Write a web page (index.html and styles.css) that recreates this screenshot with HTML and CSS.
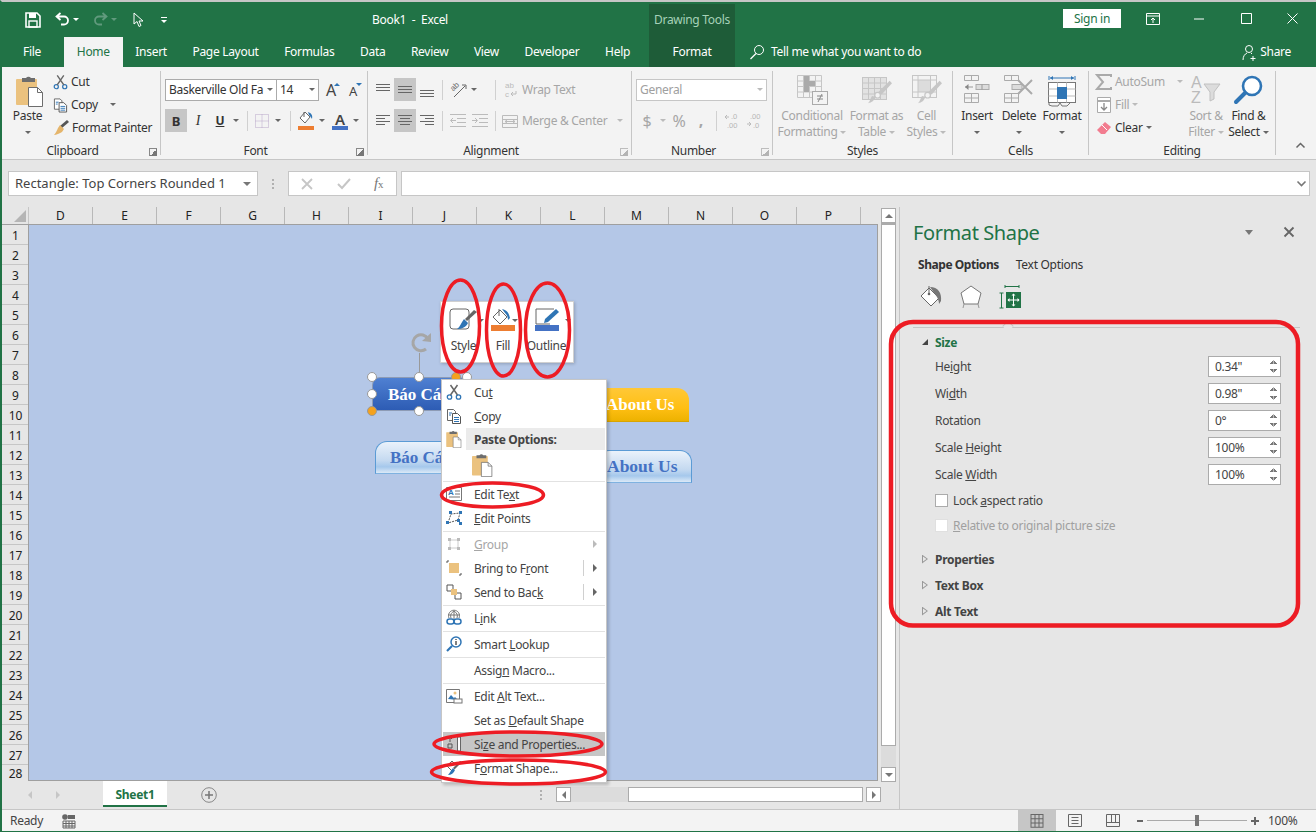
FILE: index.html
```html
<!DOCTYPE html>
<html lang="en">
<head>
    <meta charset="UTF-8">
    <meta name="viewport" content="width=device-width, initial-scale=1.0">
    <title>Book1 - Excel</title>
    <link rel="stylesheet" href="styles.css">
</head>
<body>
<svg class="defs" width="0" height="0">
    <symbol id="ic-paste" viewBox="0 0 28 32">
        <rect x="0" y="4" width="21" height="26" rx="1" fill="#ebc27f"/>
        <path d="M6 7V3h4a3 3 0 0 1 5 0h4v4z" fill="#6d6d6d"/>
        <path d="M12.5 12.5h9l5 5v14h-14z" fill="#fff" stroke="#6d6d6d"/>
        <path d="M21.5 12.5v5h5" fill="none" stroke="#6d6d6d"/>
    </symbol>
    <symbol id="ic-cut" viewBox="0 0 16 16">
        <circle cx="3.5" cy="13" r="2.2" fill="none" stroke="#2f75b5" stroke-width="1.3"/>
        <circle cx="12.5" cy="13" r="2.2" fill="none" stroke="#2f75b5" stroke-width="1.3"/>
        <path d="M4.5 11L11.5 1M11.5 11L4.5 1" stroke="#666" stroke-width="1.5"/>
    </symbol>
    <symbol id="ic-copy" viewBox="0 0 16 16">
        <path d="M1.5 1.5h6l2 2v9h-8z" fill="#fff" stroke="#666"/>
        <path d="M6.5 5.5h5l3 3v7h-8z" fill="#fff" stroke="#555"/>
        <path d="M8 9.5h5M8 11.5h5M8 13.5h5M3 5h3M3 7h2" stroke="#2f75b5"/>
    </symbol>
    <symbol id="ic-roller" viewBox="0 0 30 30">
        <path d="M30 4L17 18l-4-3L27 1z" fill="#c6c6c6"/>
        <circle cx="12" cy="19" r="3.5" fill="#f3f3f3" stroke="#c6c6c6" stroke-width="1.5"/>
        <path d="M9 21c-1 5-4 7-9 8 3-3 3-6 5-9z" fill="#c6c6c6"/>
    </symbol>
</svg>

<div class="app">
    <div class="titlebar">
        <div class="title-row">
            <div class="qat">
                <svg class="qat-save" width="16" height="16" viewBox="0 0 16 16"><path d="M1 1h11l3 3v11H1z" fill="none" stroke="#fff" stroke-width="1.6"/><rect x="4" y="1" width="7" height="5" fill="#fff"/><rect x="4" y="9" width="8" height="6" fill="none" stroke="#fff" stroke-width="1.4"/></svg>
                <svg class="qat-undo" width="15" height="15" viewBox="0 0 15 15"><path d="M5.5 1L1.5 4.5 5.5 8M2 4.5h7a4 4 0 0 1 0 8H6" fill="none" stroke="#fff" stroke-width="1.8"/></svg>
                <i class="qat-caret"></i>
                <svg class="qat-redo" width="15" height="15" viewBox="0 0 15 15"><path d="M9.5 1l4 3.5-4 3.5M13 4.5H6a4 4 0 0 0 0 8h3" fill="none" stroke="#619a7d" stroke-width="1.8"/></svg>
                <i class="qat-caret dim"></i>
                <svg class="qat-cursor" width="11" height="16" viewBox="0 0 11 16"><path d="M1 1v11l3-2.5 2 5 2-1-2-4.500h4z" fill="#217346" stroke="#fff"/></svg>
                <span class="qat-more"><i class="qat-line"></i><i class="qat-caret solo"></i></span>
            </div>
            <div class="doc-title">Book1&nbsp; -&nbsp; Excel</div>
            <div class="context-label">Drawing Tools</div>
            <button class="signin">Sign in</button>
            <div class="win-btn"><svg width="14" height="12" viewBox="0 0 14 12"><path d="M.5.5h13v11H.5zM.5 3h13M7 10V5M5 7l2-2 2 2" fill="none" stroke="#fff"/></svg></div>
            <div class="win-btn"><svg width="11" height="11" viewBox="0 0 11 11"><path d="M0 6h10" stroke="#fff"/></svg></div>
            <div class="win-btn"><svg width="11" height="11" viewBox="0 0 11 11"><path d="M.5.5h10v10H.5z" fill="none" stroke="#fff"/></svg></div>
            <div class="win-btn"><svg width="11" height="11" viewBox="0 0 11 11"><path d="M.5.500l10 10M10.500.500l-10 10" stroke="#fff"/></svg></div>
        </div>
        <div class="tab-row">
            <div class="tabs">
                <span class="tab tab-file">File</span>
                <span class="tab tab-active">Home</span>
                <span class="tab">Insert</span>
                <span class="tab">Page Layout</span>
                <span class="tab">Formulas</span>
                <span class="tab">Data</span>
                <span class="tab">Review</span>
                <span class="tab">View</span>
                <span class="tab">Developer</span>
                <span class="tab">Help</span>
            </div>
            <div class="tab-format">Format</div>
            <div class="tellme">
                <svg width="16" height="16" viewBox="0 0 16 16"><circle cx="10" cy="6" r="4.500" fill="none" stroke="#fff"/><path d="M7 9.500L1.500 15" stroke="#fff" stroke-width="1.300"/></svg>
                <span>Tell me what you want to do</span>
            </div>
            <div class="share">
                <svg width="17" height="17" viewBox="0 0 17 17"><circle cx="7" cy="5" r="3.500" fill="none" stroke="#fff"/><path d="M1 16c0-4 2-6 4-7M9 9l1 1M11 12v5M8.500 14.500h5" fill="none" stroke="#fff"/></svg>
                <span>Share</span>
            </div>
        </div>
    </div>

    <div class="ribbon">
        <!-- Clipboard -->
        <div class="group g-clipboard">
            <div class="group-body">
                <div class="big big-paste">
                    <div class="big-icon"><svg width="28" height="32"><use href="#ic-paste"/></svg></div>
                    <div class="big-text">Paste</div>
                    <div class="big-text"><i class="caret"></i></div>
                </div>
                <div class="small-col">
                    <div class="small"><svg width="15" height="16"><use href="#ic-cut"/></svg><span>Cut</span></div>
                    <div class="small"><svg width="15" height="16"><use href="#ic-copy"/></svg><span>Copy</span><i class="caret copy-caret"></i></div>
                    <div class="small">
                        <svg width="16" height="16" viewBox="0 0 16 16"><path d="M16 2L9 8 7 6l7-6z" fill="#555"/><path d="M7 5l4 4-2 3c-2 1-6 3-8 3 2-2 3-5 4-7z" fill="#e5b56b"/></svg>
                        <span>Format Painter</span>
                    </div>
                </div>
            </div>
            <div class="group-label with-launcher">Clipboard<i class="launcher"></i></div>
        </div>

        <!-- Font -->
        <div class="group g-font">
            <div class="group-body rows">
                <div class="row">
                    <div class="select sel-font"><span>Baskerville Old Fa</span><i class="caret"></i></div>
                    <div class="select sel-size"><span>14</span><i class="caret"></i></div>
                    <div class="tbtn grow-a"><span class="a-big">A</span><i class="tri-up"></i></div>
                    <div class="tbtn grow-a"><span class="a-small">A</span><i class="tri-down"></i></div>
                </div>
                <div class="row">
                    <div class="tbtn on b-btn">B</div>
                    <div class="tbtn i-btn">I</div>
                    <div class="tbtn u-btn">U</div>
                    <div class="cbtn"><i class="caret"></i></div>
                    <i class="vsep f-sep1"></i>
                    <div class="tbtn"><svg width="14" height="14" viewBox="0 0 14 14"><path d="M.5.500h13v13H.5zM7 .500v13M.5 7h13" fill="none" stroke="#b9a6c9" stroke-dasharray="1 1"/></svg></div>
                    <div class="cbtn"><i class="caret"></i></div>
                    <i class="vsep f-sep2"></i>
                    <div class="tbtn"><svg width="17" height="19" viewBox="0 0 17 19"><path d="M7 1l5 5-5 6-5-5z" fill="#fff" stroke="#666"/><path d="M6 1v5" stroke="#666"/><path d="M10 1c3 1 5 3 4 7-1-2-2-3-3-4z" fill="#2f75b5"/><rect x="0" y="15" width="16" height="4" fill="#ed7d31"/></svg></div>
                    <div class="cbtn"><i class="caret"></i></div>
                    <div class="tbtn color-a"><span>A</span><i></i></div>
                    <div class="cbtn"><i class="caret"></i></div>
                </div>
            </div>
            <div class="group-label with-launcher">Font<i class="launcher"></i></div>
        </div>

        <!-- Alignment -->
        <div class="group g-align">
            <div class="group-body rows">
                <div class="row">
                    <div class="tbtn"><svg width="14" height="14" viewBox="0 0 14 14"><path d="M0 1.500h14M0 4.500h14M0 7.500h14" stroke="#666"/></svg></div>
                    <div class="tbtn on"><svg width="14" height="14" viewBox="0 0 14 14"><path d="M0 3.500h14M0 6.500h14M0 9.500h14" stroke="#666"/></svg></div>
                    <div class="tbtn"><svg width="14" height="14" viewBox="0 0 14 14"><path d="M0 7.500h14M0 10.500h14M0 13.500h14" stroke="#666"/></svg></div>
                    <i class="vsep a-sep1"></i>
                    <div class="tbtn"><svg width="17" height="16" viewBox="0 0 17 16"><path d="M4 15L15 4" stroke="#666"/><path d="M12 3l4 0v4" fill="none" stroke="#666"/><text x="1" y="8" class="ico-text" transform="rotate(-45 4 6)">ab</text></svg></div>
                    <div class="cbtn"><i class="caret"></i></div>
                    <i class="vsep a-sep2"></i>
                    <div class="tbtn"><svg width="15" height="16" viewBox="0 0 15 16"><text x="2" y="6" class="ico-text off">ab</text><text x="2" y="15" class="ico-text off">c</text><path d="M13 9v3H8M10 10l-2 2 2 2" fill="none" stroke="#bbb"/></svg></div>
                    <span class="off-text wrap-label">Wrap Text</span>
                </div>
                <div class="row">
                    <div class="tbtn"><svg width="14" height="14" viewBox="0 0 14 14"><path d="M0 1.500h14M0 4.500h9M0 7.500h14M0 10.500h9" stroke="#666"/></svg></div>
                    <div class="tbtn on"><svg width="14" height="14" viewBox="0 0 14 14"><path d="M0 1.500h14M2 4.500h10M0 7.500h14M2 10.500h10" stroke="#666"/></svg></div>
                    <div class="tbtn"><svg width="14" height="14" viewBox="0 0 14 14"><path d="M0 1.500h14M5 4.500h9M0 7.500h14M5 10.500h9" stroke="#666"/></svg></div>
                    <i class="vsep a-sep1"></i>
                    <div class="tbtn"><svg width="16" height="14" viewBox="0 0 16 14"><path d="M0 .500h16M7 4.500h9M7 8.500h9M0 12.500h16M1 6.500h5M3 4L.5 6.500 3 9" fill="none" stroke="#bbb"/></svg></div>
                    <div class="tbtn"><svg width="16" height="14" viewBox="0 0 16 14"><path d="M0 .500h16M7 4.500h9M7 8.500h9M0 12.500h16M0 6.500h5M3 4l2.500 2.500L3 9" fill="none" stroke="#bbb"/></svg></div>
                    <i class="vsep a-sep3"></i>
                    <div class="tbtn"><svg width="16" height="16" viewBox="0 0 16 16"><path d="M.5 2.500h15v12H.5zM.5 6.500h15M.5 10.500h15M3 8.500h10M3 8.500l2-1.500M3 8.500l2 1.500M13 8.500l-2-1.500M13 8.500l-2 1.500" fill="none" stroke="#bbb"/></svg></div>
                    <span class="off-text">Merge &amp; Center</span>
                    <i class="caret off merge-caret"></i>
                </div>
            </div>
            <div class="group-label with-launcher">Alignment<i class="launcher off"></i></div>
        </div>

        <!-- Number -->
        <div class="group g-number">
            <div class="group-body rows">
                <div class="row">
                    <div class="select sel-number"><span>General</span><i class="caret off"></i></div>
                </div>
                <div class="row">
                    <div class="tbtn off-text sym">$</div>
                    <div class="cbtn"><i class="caret off"></i></div>
                    <div class="tbtn off-text sym">%</div>
                    <div class="tbtn off-text sym comma">,</div>
                    <i class="vsep n-sep"></i>
                    <div class="tbtn"><svg width="16" height="15" viewBox="0 0 16 15"><path d="M1 4h4M3 2L1 4l2 2" fill="none" stroke="#bbb"/><text x="7" y="6" class="ico-small">.0</text><text x="3" y="15" class="ico-small">.00</text></svg></div>
                    <div class="tbtn"><svg width="16" height="15" viewBox="0 0 16 15"><text x="4" y="6" class="ico-small">.00</text><path d="M1 11h4M3 9l2 2-2 2" fill="none" stroke="#bbb"/><text x="7" y="15" class="ico-small">.0</text></svg></div>
                </div>
            </div>
            <div class="group-label with-launcher">Number<i class="launcher off"></i></div>
        </div>

        <!-- Styles -->
        <div class="group g-styles">
            <div class="group-body">
                <div class="big big-cond off-text">
                    <div class="big-icon">
                        <svg width="31" height="30" viewBox="0 0 31 30"><path d="M.5.500h24v22H.5zM6.500.500v22M12.500.500v22M18.500.500v22M.5 6h24M.5 11.500h24M.5 17h24" fill="none" stroke="#c6c6c6"/><path d="M7 1h5v5h6v5h-6v6H7z" fill="#aaa"/><rect x="15.500" y="16.500" width="15" height="13" fill="#f3f3f3" stroke="#aaa"/><path d="M20 21h6M20 24h6M25 19l-4 8" stroke="#888"/></svg>
                    </div>
                    <div class="big-text">Conditional</div>
                    <div class="big-text">Formatting<i class="caret off"></i></div>
                </div>
                <div class="big big-table off-text">
                    <div class="big-icon">
                        <svg width="30" height="30" viewBox="0 0 30 30"><rect x=".5" y="2.500" width="24" height="22" fill="#e2e2e2" stroke="#c6c6c6"/><path d="M6.500 2.500v22M12.500 2.500v22M18.500 2.500v22M.5 8h24M.5 13.500h24M.5 19h24" stroke="#c6c6c6"/><use href="#ic-roller" width="24" height="26" x="6" y="4"/></svg>
                    </div>
                    <div class="big-text">Format as</div>
                    <div class="big-text">Table<i class="caret off"></i></div>
                </div>
                <div class="big big-cell off-text">
                    <div class="big-icon">
                        <svg width="30" height="30" viewBox="0 0 30 30"><rect x=".5" y=".500" width="24" height="22" fill="#f3f3f3" stroke="#c6c6c6"/><rect x="6" y="5" width="13" height="12" fill="#dcdcdc"/><path d="M6 .500v22M18.500 .500v22M.5 5h24M.5 17h24" stroke="#c6c6c6"/><use href="#ic-roller" width="24" height="26" x="6" y="4"/></svg>
                    </div>
                    <div class="big-text">Cell</div>
                    <div class="big-text">Styles<i class="caret off"></i></div>
                </div>
            </div>
            <div class="group-label">Styles</div>
        </div>

        <!-- Cells -->
        <div class="group g-cells">
            <div class="group-body">
                <div class="big big-insert">
                    <div class="big-icon">
                        <svg width="26" height="28" viewBox="0 0 26 28"><path d="M.5.500h14v5H.5zM7.500.500v5M.5 18.500h14v9H.5zM7.500 18.500v9M.5 23h14" fill="none" stroke="#ababab"/><rect x="12" y="9.500" width="13" height="5" fill="#dcdcdc" stroke="#ababab"/><path d="M18 9.500v5M1 12h8" stroke="#999"/><path d="M1 12l3.500-3v6z" fill="#888"/></svg>
                    </div>
                    <div class="big-text">Insert</div>
                    <div class="big-text"><i class="caret"></i></div>
                </div>
                <div class="big big-delete">
                    <div class="big-icon">
                        <svg width="30" height="28" viewBox="0 0 30 28"><path d="M.5.500h14v5H.5zM7.500.500v5M.5 18.500h14v9H.5zM7.500 18.500v9M.5 23h14" fill="none" stroke="#ababab"/><rect x="8" y="9.500" width="10" height="5" fill="#dcdcdc" stroke="#ababab"/><path d="M14 5l14 14M28 5L14 19" stroke="#aaa" stroke-width="2"/></svg>
                    </div>
                    <div class="big-text">Delete</div>
                    <div class="big-text"><i class="caret"></i></div>
                </div>
                <div class="big big-format">
                    <div class="big-icon">
                        <svg width="28" height="32" viewBox="0 0 28 32"><path d="M1 1v4M27 1v4M2 3h24" stroke="#2f75b5"/><path d="M2 3l3-2v4zM26 3l-3-2v4z" fill="#2f75b5"/><rect x=".5" y="7.500" width="27" height="20" fill="#fff" stroke="#777"/><path d="M9.500 7.500v20M18.500 7.500v20M.5 14h27M.5 21h27" stroke="#bbb"/><rect x="9" y="12" width="10" height="12" fill="#2f75b5"/><path d="M1 28v2l3 1h6l2-3M12 28l2 3h5l3-3" fill="none" stroke="#777"/></svg>
                    </div>
                    <div class="big-text">Format</div>
                    <div class="big-text"><i class="caret"></i></div>
                </div>
            </div>
            <div class="group-label">Cells</div>
        </div>

        <!-- Editing -->
        <div class="group g-editing">
            <div class="group-body">
                <div class="small-col edit-col">
                    <div class="small off-text"><svg width="16" height="16" viewBox="0 0 16 16"><path d="M15 3V1H1l6 7-6 7h14v-2" fill="none" stroke="#aaa" stroke-width="2"/></svg><span>AutoSum</span><i class="caret off sum-caret"></i></div>
                    <div class="small off-text"><svg width="16" height="16" viewBox="0 0 16 16"><path d="M1.500.500h13v15h-13z" fill="#fff" stroke="#aaa"/><path d="M1.500 4h13" stroke="#aaa" stroke-width="2"/><path d="M8 6v7M5 10l3 3 3-3" fill="none" stroke="#888" stroke-width="1.300"/></svg><span>Fill</span><i class="caret off fill-caret"></i></div>
                    <div class="small"><svg width="16" height="16" viewBox="0 0 16 16"><path d="M9 2l6 5-6 7H5l-4-4z" fill="#f27c8f"/><path d="M6 5l5 5" stroke="#fff"/></svg><span>Clear</span><i class="caret fill-caret"></i></div>
                </div>
                <div class="big big-sort off-text">
                    <div class="big-icon">
                        <svg width="30" height="28" viewBox="0 0 30 28"><text x="0" y="13" class="ico-az">A</text><text x="0" y="28" class="ico-az">Z</text><path d="M13 9h16l-6 8v7l-4 2v-9z" fill="#dcdcdc" stroke="#c0c0c0"/></svg>
                    </div>
                    <div class="big-text">Sort &amp;</div>
                    <div class="big-text">Filter<i class="caret off"></i></div>
                </div>
                <div class="big big-find">
                    <div class="big-icon">
                        <svg width="30" height="29" viewBox="0 0 30 29"><circle cx="18" cy="11" r="9" fill="#fff" stroke="#2f75b5" stroke-width="2.600"/><path d="M11 18L2 27" stroke="#2f75b5" stroke-width="4" stroke-linecap="round"/></svg>
                    </div>
                    <div class="big-text">Find &amp;</div>
                    <div class="big-text">Select<i class="caret"></i></div>
                </div>
            </div>
            <div class="group-label">Editing</div>
        </div>

        <div class="collapse"><svg width="9" height="6" viewBox="0 0 9 6"><path d="M.5 5.500l4-4 4 4" fill="none" stroke="#666" stroke-width="1.500"/></svg></div>
    </div>

    <div class="formula-bar">
        <div class="name-box"><span>Rectangle: Top Corners Rounded 1</span><i class="caret"></i></div>
        <div class="grip"><i></i><i></i><i></i></div>
        <div class="fx-box">
            <svg width="12" height="12" viewBox="0 0 12 12"><path d="M1 1l10 10M11 1L1 11" stroke="#c6c6c6" stroke-width="1.800"/></svg>
            <svg width="14" height="12" viewBox="0 0 14 12"><path d="M1 6l4 4 8-9" fill="none" stroke="#c6c6c6" stroke-width="2"/></svg>
            <span class="fx"><em>f</em><small>x</small></span>
        </div>
        <div class="fx-input"><svg width="9" height="6" viewBox="0 0 9 6"><path d="M.5.500l4 4 4-4" fill="none" stroke="#777" stroke-width="1.600"/></svg></div>
    </div>

    <div class="workspace">
        <div class="sheet">
            <div class="sheet-main">
                <div class="grid">
                    <div class="col-heads">
                        <div class="corner"><i></i></div>
                        <div class="col-head">D</div>
                        <div class="col-head">E</div>
                        <div class="col-head">F</div>
                        <div class="col-head">G</div>
                        <div class="col-head">H</div>
                        <div class="col-head">I</div>
                        <div class="col-head">J</div>
                        <div class="col-head">K</div>
                        <div class="col-head">L</div>
                        <div class="col-head">M</div>
                        <div class="col-head">N</div>
                        <div class="col-head">O</div>
                        <div class="col-head">P</div>
                        <div class="col-head col-rest"></div>
                    </div>
                    <div class="grid-body">
                        <div class="row-heads">
                            <div>1</div><div>2</div><div>3</div><div>4</div><div>5</div><div>6</div><div>7</div>
                            <div>8</div><div>9</div><div>10</div><div>11</div><div>12</div><div>13</div><div>14</div>
                            <div>15</div><div>16</div><div>17</div><div>18</div><div>19</div><div>20</div><div>21</div>
                            <div>22</div><div>23</div><div>24</div><div>25</div><div>26</div><div>27</div><div class="row-last">28</div>
                        </div>
                        <div class="canvas">
                            <div class="shape shape-gold">About Us</div>
                            <div class="shape shape-light s1">Báo Cáo</div>
                            <div class="shape shape-light s2">About Us</div>
                            <div class="shape shape-blue">Báo Cáo</div>
                            <i class="rot-line"></i>
                            <svg class="rot-handle" width="24" height="24" viewBox="0 0 24 24"><path d="M18 17a8 8 0 1 1 2-10" fill="none" stroke="#a6a6a6" stroke-width="3"/><path d="M14 9l9 1V1z" fill="#a6a6a6"/></svg>
                            <i class="handle h1"></i><i class="handle h2"></i><i class="handle h3 orange"></i><i class="handle h4"></i>
                            <i class="handle h5"></i><i class="handle h6 orange"></i><i class="handle h7"></i>
                        </div>
                    </div>
                </div>
                <div class="vscroll">
                    <div class="sb-btn"><i class="tri tri-u"></i></div>
                    <div class="sb-thumb"></div>
                    <div class="sb-track"></div>
                    <div class="sb-btn"><i class="tri tri-d"></i></div>
                </div>
            </div>
            <div class="sheet-tabs">
                <span class="nav nav-l"></span>
                <span class="nav nav-r"></span>
                <div class="sheet-tab">Sheet1</div>
                <div class="add-sheet"><svg width="16" height="16" viewBox="0 0 16 16"><circle cx="8" cy="8" r="7.300" fill="none" stroke="#888"/><path d="M8 4v8M4 8h8" stroke="#777" stroke-width="1.500"/></svg></div>
                <div class="grip tabs-grip"><i></i><i></i><i></i></div>
                <div class="hscroll">
                    <div class="sb-btn"><i class="tri tri-l"></i></div>
                    <div class="sb-track"></div>
                    <div class="sb-thumb"></div>
                    <div class="sb-btn"><i class="tri tri-r"></i></div>
                </div>
            </div>
        </div>

        <div class="pane">
            <div class="pane-head">
                <div class="pane-title">Format Shape</div>
                <i class="pane-caret"></i>
                <svg class="pane-close" width="10" height="10" viewBox="0 0 10 10"><path d="M.5.500l9 9M9.500.500l-9 9" stroke="#666" stroke-width="1.800"/></svg>
            </div>
            <div class="pane-tabs">
                <span class="pane-tab on">Shape Options</span>
                <span class="pane-tab">Text Options</span>
            </div>
            <div class="pane-icons">
                <svg width="24" height="24" viewBox="0 0 24 24"><path d="M10 3l10 10-8 8-10-10z" fill="#fff" stroke="#666"/><path d="M10 1v8" stroke="#666"/><circle cx="10" cy="9" r="1.300" fill="#666"/><path d="M11 2c8 0 12 6 11 14l-2 3c0-3-1-5-2-7z" fill="#777"/></svg>
                <svg width="22" height="24" viewBox="0 0 22 24"><path d="M11 1l10 7-3 11H4L1 8z" fill="#fff" stroke="#777"/><path d="M4 19l-1 4M18 19l1 4" stroke="#999"/></svg>
                <svg width="22" height="24" viewBox="0 0 22 24"><path d="M6 1.500h14M6 0v3M20 0v3M.5 8h4M.5 23h4M2.500 8v15" fill="none" stroke="#217346"/><rect x="7" y="7" width="15" height="16" fill="#217346"/><path d="M14.500 9v12M9 15h11" stroke="#fff"/><path d="M14.500 8.500l-2 2h4zM14.500 21.500l-2-2h4zM8.500 15l2-2v4zM20.500 15l-2-2v4z" fill="#fff"/></svg>
            </div>
            <div class="pane-rule"><i></i></div>
            <div class="section-head open"><i class="tri-open"></i><span>Size</span></div>
            <div class="field"><span>He<u>i</u>ght</span><div class="spin"><span>0.34"</span><i class="spin-arrows"></i></div></div>
            <div class="field"><span>Wi<u>d</u>th</span><div class="spin"><span>0.98"</span><i class="spin-arrows"></i></div></div>
            <div class="field"><span>Rotation</span><div class="spin"><span>0°</span><i class="spin-arrows"></i></div></div>
            <div class="field"><span>Scale <u>H</u>eight</span><div class="spin"><span>100%</span><i class="spin-arrows"></i></div></div>
            <div class="field"><span>Scale <u>W</u>idth</span><div class="spin"><span>100%</span><i class="spin-arrows"></i></div></div>
            <div class="check"><i></i><span>Lock <u>a</u>spect ratio</span></div>
            <div class="check disabled"><i></i><span><u>R</u>elative to original picture size</span></div>
            <div class="section-head first-closed"><i class="tri-closed"></i><span>Properties</span></div>
            <div class="section-head"><i class="tri-closed"></i><span>Text Box</span></div>
            <div class="section-head"><i class="tri-closed"></i><span>Alt Text</span></div>
        </div>
    </div>

    <div class="statusbar">
        <span class="ready">Ready</span>
        <svg class="macro" width="13" height="14" viewBox="0 0 13 14"><circle cx="3" cy="3" r="2.800" fill="#666"/><path d="M6 1h7v4H6z" fill="#666"/><path d="M1 7h12v7H1zM1 9.500h12M1 12h12M4 7v7M7 7v7M10 7v7" fill="none" stroke="#666"/></svg>
        <div class="view-btn on"><svg width="18" height="16" viewBox="0 0 18 16"><path d="M.5 1.500h12v12H.5zM4.500 1.500v12M8.500 1.500v12M.5 5.500h12M.5 9.500h12" fill="none" stroke="#666" transform="translate(2.500 0) scale(1 1.050)"/></svg></div>
        <div class="view-btn"><svg width="14" height="13" viewBox="0 0 14 13"><path d="M.5.500h13v12H.5zM3.500 3.500h7M3.500 6.500h7M3.500 9.500h7" fill="none" stroke="#666"/></svg></div>
        <div class="view-btn"><svg width="14" height="13" viewBox="0 0 14 13"><path d="M.5.500h13v12H.5zM.5 8.500h13M5.500.500v8M9.500.500v8" fill="none" stroke="#666"/></svg></div>
        <div class="zoom-slider">
            <i class="z-minus"></i>
            <div class="z-track"><i class="z-thumb"></i></div>
            <i class="z-plus"></i>
        </div>
        <span class="zoom-pct">100%</span>
    </div>
</div>

<!-- Mini toolbar -->
<div class="mini">
    <div class="mini-btn m-style">
        <svg width="30" height="24" viewBox="0 0 30 24"><rect x="1" y="1" width="19" height="20" rx="3" fill="#fff" stroke="#666"/><path d="M28 4L18 13l-2-2 9-9z" fill="#666"/><path d="M15 11l4 4c-2 4-6 6-11 6 3-2 4-6 7-10z" fill="#2f75b5"/></svg>
        <i class="mini-caret"></i>
        <span>Style</span>
    </div>
    <div class="mini-btn m-fill">
        <svg width="26" height="24" viewBox="0 0 26 24"><path d="M10 2l7 7-7 7-7-7z" fill="#fff" stroke="#666"/><path d="M9 1v7" stroke="#666"/><path d="M12 1c5 1 7 4 8 9l-2 2c0-3-1-5-3-7z" fill="#2f75b5"/><rect x="1" y="17" width="24" height="6" fill="#ed7d31"/></svg>
        <i class="mini-caret"></i>
        <span>Fill</span>
    </div>
    <div class="mini-btn m-outline">
        <svg width="26" height="24" viewBox="0 0 26 24"><path d="M20 1H2v15h14" fill="none" stroke="#666"/><path d="M22 1l3 3-11 10-4 1 1-4z" fill="#2f75b5"/><rect x="1" y="17" width="24" height="6" fill="#4472c4"/></svg>
        <i class="mini-caret"></i>
        <span>Outline</span>
    </div>
</div>

<!-- Context menu -->
<div class="menu">
    <div class="mi"><svg width="16" height="16"><use href="#ic-cut"/></svg><span>Cu<u>t</u></span></div>
    <div class="mi"><svg width="16" height="16"><use href="#ic-copy"/></svg><span><u>C</u>opy</span></div>
    <div class="mi mi-paste-head"><svg width="16" height="18" viewBox="0 0 28 32"><use href="#ic-paste"/></svg><span>Paste Options:</span></div>
    <div class="mi-paste-row"><svg width="21" height="24" viewBox="0 0 28 32"><use href="#ic-paste"/></svg></div>
    <i class="msep"></i>
    <div class="mi">
        <svg width="16" height="14" viewBox="0 0 16 14"><path d="M.5.500h15v13H.5z" fill="#fff" stroke="#777"/><path d="M9 4h5M9 7h5M3 10h11" stroke="#777"/><text x="2" y="8" class="ico-menu-a">A</text></svg>
        <span>Edit Te<u>x</u>t</span>
    </div>
    <div class="mi">
        <svg width="16" height="14" viewBox="0 0 16 14"><path d="M2 12L5 3l9-1-2 7z" fill="none" stroke="#555" stroke-dasharray="2 1"/><path d="M0 10h3v3H0zM3 0h3v3H3zM13 0h3v3h-3zM11 8h3v3h-3zM13 11h3v3h-3z" fill="#2f75b5"/></svg>
        <span><u>E</u>dit Points</span>
    </div>
    <i class="msep"></i>
    <div class="mi dis has-arrow">
        <svg width="16" height="16" viewBox="0 0 16 16"><path d="M4 4h8v8H4z" fill="none" stroke="#ccc"/><path d="M2 2h3v3H2zM11 2h3v3h-3zM2 11h3v3H2zM11 11h3v3h-3z" fill="#bbb"/></svg>
        <span><u>G</u>roup</span><i class="mi-arrow"></i>
    </div>
    <div class="mi has-arrow">
        <svg width="16" height="16" viewBox="0 0 16 16"><path d="M1 1h2M1 1v2M15 15h-2M15 15v-2" stroke="#555"/><rect x="3" y="3" width="10" height="10" fill="#ebc27f"/></svg>
        <span>Bring to F<u>r</u>ont</span><i class="vbar"></i><i class="mi-arrow"></i>
    </div>
    <div class="mi has-arrow">
        <svg width="16" height="16" viewBox="0 0 16 16"><path d="M1 1h6v6H1zM9 9h6v6H9z" fill="none" stroke="#555"/><rect x="5" y="5" width="6" height="6" fill="#ebc27f"/></svg>
        <span>Send to Bac<u>k</u></span><i class="vbar"></i><i class="mi-arrow"></i>
    </div>
    <i class="msep"></i>
    <div class="mi">
        <svg width="16" height="16" viewBox="0 0 16 16"><path d="M3 8a5.500 5.500 0 1 1 10 0M2 5h12M8 1v8M5 8c-1-3 0-5 3-7 3 2 4 4 3 7" fill="none" stroke="#777"/><rect x="1" y="9" width="7" height="5" rx="2.500" fill="none" stroke="#2f75b5" stroke-width="1.500"/><rect x="8" y="9" width="7" height="5" rx="2.500" fill="none" stroke="#2f75b5" stroke-width="1.500"/></svg>
        <span>L<u>i</u>nk</span>
    </div>
    <i class="msep"></i>
    <div class="mi">
        <svg width="16" height="16" viewBox="0 0 16 16"><circle cx="10" cy="6" r="5" fill="#fff" stroke="#2f75b5" stroke-width="1.500"/><path d="M6 10l-5 5" stroke="#2f75b5" stroke-width="2.200"/><path d="M10 5v4M10 3v1" stroke="#555" stroke-width="1.500"/></svg>
        <span>Smart <u>L</u>ookup</span>
    </div>
    <i class="msep"></i>
    <div class="mi"><i class="mi-blank"></i><span>Assig<u>n</u> Macro...</span></div>
    <i class="msep"></i>
    <div class="mi">
        <svg width="16" height="16" viewBox="0 0 16 16"><path d="M.5 1.500h13v13H.5z" fill="#fff" stroke="#777"/><path d="M2 11l3-4 3 3 1-1 3 3" fill="#2f75b5"/><circle cx="9" cy="5" r="1.500" fill="#ebc27f"/><rect x="8" y="11" width="8" height="4" fill="#fff" stroke="#777"/></svg>
        <span>Edit <u>A</u>lt Text...</span>
    </div>
    <div class="mi"><i class="mi-blank"></i><span>Set as <u>D</u>efault Shape</span></div>
    <div class="mi mi-hover">
        <svg width="16" height="16" viewBox="0 0 16 16"><path d="M11.500 1v14h3V1z" fill="#fff" stroke="#666"/><path d="M4 1v5M2 3l2-2 2 2M2 8h4v4H2z" fill="none" stroke="#555"/></svg>
        <span>Si<u>z</u>e and Properties...</span>
    </div>
    <div class="mi">
        <svg width="16" height="16" viewBox="0 0 16 16"><path d="M6 1l5 5-5 5-5-5z" fill="#fff" stroke="#666"/><path d="M16 2L9 9l-2-1 7-7z" fill="#666"/><path d="M7 8l2 2c-1 3-4 5-7 5 2-2 3-5 5-7z" fill="#2f75b5"/></svg>
        <span>F<u>o</u>rmat Shape...</span>
    </div>
</div>

<!-- Red marks drawn over the screenshot -->
<svg class="marks" width="1316" height="832" viewBox="0 0 1316 832">
    <ellipse cx="460.500" cy="326" rx="19" ry="46"/>
    <ellipse cx="503.500" cy="330" rx="17" ry="46"/>
    <ellipse cx="547.500" cy="330" rx="22" ry="47"/>
    <ellipse cx="492.500" cy="495" rx="51" ry="12"/>
    <ellipse cx="518" cy="744" rx="84" ry="12"/>
    <ellipse cx="518.500" cy="772" rx="87" ry="12"/>
    <rect class="mark-box" x="891" y="322" width="407" height="303.500" rx="22"/>
</svg>
</body>
</html>
```

FILE: styles.css
```css
* {
    box-sizing: border-box;
}

body {
    margin: 0;
    width: 1316px;
    height: 832px;
    overflow: hidden;
    position: relative;
    font-family: "Noto Sans", "Open Sans", sans-serif;
    font-size: 12px;
    letter-spacing: -0.3px;
    color: #333;
    background: #e6e6e6;
}

i {
    display: block;
    font-style: normal;
}

svg {
    display: block;
    flex: none;
    overflow: visible;
}

.defs {
    position: absolute;
}

.app {
    display: flex;
    flex-direction: column;
    height: 832px;
    border-top: 2px solid #c6c6c6;
    border-left: 2px solid #217346;
    border-bottom: 1px solid #217346;
}

/* Title bar */
.titlebar {
    height: 65px;
    background: #217346;
    color: #fff;
    flex: none;
    margin-left: -2px;
    padding-left: 2px;
}

.title-row {
    display: flex;
    align-items: stretch;
    height: 35px;
}

.qat {
    display: flex;
    align-items: center;
    width: 360px;
    padding: 0 0 0 23px;
}

.qat-undo {
    margin-left: 14px;
}

.qat-caret {
    width: 0;
    height: 0;
    margin-left: 3px;
    border: 3px solid transparent;
    border-top: 3px solid #fff;
    border-bottom: 0;
}

.qat-caret.dim {
    border-top-color: #619a7d;
}

.qat-caret.solo {
    margin: 2px 0 0;
}

.qat-redo {
    margin-left: 14px;
}

.qat-cursor {
    margin-left: 16px;
}

.qat-more {
    margin-left: 17px;
    display: flex;
    flex-direction: column;
    align-items: center;
}

.qat-line {
    width: 6px;
    height: 1px;
    background: #fff;
}

.doc-title {
    width: 96px;
    text-align: center;
    line-height: 35px;
    white-space: nowrap;
}

.context-label {
    width: 86px;
    margin: 2px 0 0 191px;
    background: #1e5c38;
    color: #a6d2b8;
    text-align: center;
    line-height: 31px;
    white-space: nowrap;
}

.signin {
    width: 58px;
    height: 19px;
    margin: 7px 9px 0 328px;
    border: 0;
    padding: 0;
    background: #fff;
    color: #217346;
    font: inherit;
    letter-spacing: inherit;
}

.win-btn {
    width: 46.500px;
    display: flex;
    align-items: center;
    justify-content: center;
    padding-bottom: 2px;
}

.tab-row {
    display: flex;
    height: 30px;
    align-items: stretch;
    line-height: 30px;
}

.tabs {
    display: flex;
    width: 647px;
}

.tab {
    flex: none;
    padding: 0 12.800px;
    white-space: nowrap;
}

.tab-file {
    width: 62px;
    padding: 0 2px 0 0;
    text-align: center;
}

.tab-active {
    background: #f3f3f3;
    color: #217346;
}

.tab-format {
    width: 86px;
    text-align: center;
    background: #1e5c38;
}

.tellme {
    display: flex;
    align-items: center;
    gap: 6px;
    margin-left: 14px;
}

.share {
    display: flex;
    align-items: center;
    gap: 1px;
    margin-left: auto;
    padding-right: 25px;
}

/* Ribbon */
.ribbon {
    display: flex;
    flex: none;
    height: 93px;
    background: #f3f3f3;
    border-bottom: 1px solid #c6c6c6;
}

.group {
    position: relative;
    display: flex;
    flex-direction: column;
    flex: none;
    height: 84px;
    margin-top: 4px;
    border-right: 1px solid #c6c6c6;
}

.group-body {
    display: flex;
    flex: none;
    height: 72px;
}

.group-label {
    position: relative;
    flex: none;
    height: 16px;
    line-height: 16px;
    text-align: center;
    color: #333;
}

.with-launcher {
    padding-right: 17px;
}

.launcher {
    position: absolute;
    right: 3px;
    top: 5px;
    width: 8px;
    height: 8px;
    border-left: 1px solid #888;
    border-top: 1px solid #888;
    background: linear-gradient(135deg, transparent 50%, #777 50%);
}

.launcher.off {
    opacity: 0.5;
}

.g-clipboard { width: 159px; }
.g-font { width: 207px; }
.g-align { width: 264px; }
.g-number { width: 141px; }
.g-styles { width: 180px; }
.g-cells { width: 136px; }
.g-editing { width: 187px; }

.rows {
    flex-direction: column;
    gap: 8px;
    padding: 7px 0 0 4px;
}

.row {
    display: flex;
    align-items: center;
    height: 23px;
    white-space: nowrap;
}

.tbtn {
    flex: none;
    display: flex;
    align-items: center;
    justify-content: center;
    position: relative;
    width: 22px;
    height: 23px;
}

.tbtn.on {
    background: #c6c6c6;
}

.cbtn {
    flex: none;
    display: flex;
    align-items: center;
    justify-content: center;
    width: 10px;
    height: 23px;
}

.caret {
    display: inline-block;
    width: 0;
    height: 0;
    border: 3px solid transparent;
    border-top: 3px solid #666;
    border-bottom: 0;
    vertical-align: middle;
}

.caret.off {
    border-top-color: #bbb;
}

.vsep {
    flex: none;
    width: 1px;
    height: 20px;
    background: #d0d0d0;
}

.select {
    display: flex;
    align-items: center;
    height: 22px;
    background: #fff;
    border: 1px solid #ababab;
    padding: 0 3px 0 3px;
}

.select .caret {
    margin-left: auto;
}

.sel-font {
    width: 111px;
    border-right: 0;
    overflow: hidden;
    white-space: nowrap;
}

.sel-size {
    width: 43px;
    margin-right: 1px;
}

.sel-number {
    width: 131px;
    color: #a0a0a0;
    border-color: #c6c6c6;
}

.b-btn {
    font-weight: bold;
    font-size: 13px;
}

.i-btn {
    font-family: "Liberation Serif", serif;
    font-style: italic;
    font-size: 14px;
}

.u-btn {
    text-decoration: underline;
    font-weight: bold;
    font-size: 12px;
}

.a-big, .a-small {
    color: #444;
    line-height: 1;
}

.a-big { font-size: 16px; }
.a-small { font-size: 13px; margin-top: 3px; }

.tri-up, .tri-down {
    position: absolute;
    right: 2px;
    top: 5px;
    width: 0;
    height: 0;
    border: 3px solid transparent;
    border-bottom: 3px solid #2f75b5;
    border-top: 0;
}

.tri-down {
    border-bottom: 0;
    border-top: 3px solid #2f75b5;
}

.color-a {
    flex-direction: column;
    margin-left: 2px;
    font-size: 15px;
    line-height: 14px;
    font-weight: 600;
    color: #444;
}

.color-a i {
    width: 16px;
    height: 4px;
    background: #4472c4;
}

.f-sep1 { margin: 0 3px 0 6px; }
.f-sep2 { margin: 0 4px 0 7px; }
.a-sep1 { margin: 0 4px; }
.a-sep2 { margin: 0 3px 0 16px; }
.a-sep3 { margin: 0 3px 0 4px; }
.n-sep { margin: 0 4px; }

.off-text {
    color: #a6a6a6;
}

.g-align .off-text {
    margin-left: 1px;
}

.merge-caret {
    margin-left: 10px;
}

.sym {
    font-size: 16px;
}

.comma {
    font-weight: bold;
    align-items: flex-start;
}

.ico-text {
    font-size: 8px;
    font-family: "Liberation Sans", sans-serif;
    letter-spacing: 0;
    fill: #666;
}

.ico-text.off {
    fill: #bbb;
}

.ico-small {
    font-size: 7.500px;
    font-family: "Liberation Sans", sans-serif;
    letter-spacing: 0;
    fill: #b5b5b5;
}

.ico-az {
    font-size: 16px;
    fill: #bbb;
    font-family: "Liberation Sans", sans-serif;
}

.ico-menu-a {
    font-size: 8px;
    font-weight: bold;
    fill: #2f75b5;
    font-family: "Liberation Sans", sans-serif;
}

/* Large ribbon buttons */
.big {
    display: flex;
    flex-direction: column;
    align-items: center;
    flex: none;
    white-space: nowrap;
}

.big-icon {
    height: 37px;
    padding-top: 4px;
}

.big-text {
    height: 15.500px;
    line-height: 15.500px;
}

.big-text .caret {
    margin-left: 3px;
}

.big-insert .caret, .big-delete .caret, .big-format .caret, .big-paste .caret {
    margin-left: 0;
}

.big-paste { width: 51px; }
.big-paste .big-icon { margin-left: 5px; }
.big-cond { width: 72px; margin-left: 3px; }
.big-table { width: 57px; }
.big-cell { width: 43px; }
.big-insert { width: 42px; margin-left: 3px; }
.big-delete { width: 42px; }
.big-format { width: 44px; }
.big-sort { width: 42px; }
.big-find { width: 43px; }

/* Small ribbon buttons */
.small-col {
    display: flex;
    flex-direction: column;
    width: 107px;
    margin-top: -1px;
}

.edit-col {
    width: 96px;
    padding-left: 7px;
}

.small {
    display: flex;
    align-items: center;
    gap: 3px;
    height: 23px;
    white-space: nowrap;
}

.copy-caret {
    margin-left: 9px;
}

.sum-caret {
    margin-left: 9px;
}

.fill-caret {
    margin-left: 0;
}

.collapse {
    margin: 75px 0 0 20px;
}

/* Formula bar */
.formula-bar {
    display: flex;
    flex: none;
    height: 47px;
    padding: 11px 6px 11px 6px;
}

.name-box {
    display: flex;
    align-items: center;
    width: 250px;
    height: 25px;
    background: #fff;
    border: 1px solid #c6c6c6;
    padding: 0 6px 0 6px;
    font-size: 13px;
    letter-spacing: 0;
    line-height: 21px;
    color: #444;
}

.name-box .caret {
    margin-left: auto;
    border-width: 4px;
    border-top-width: 4px;
    border-bottom: 0;
    border-top-color: #777;
}

.grip {
    display: flex;
    flex-direction: column;
    justify-content: center;
    gap: 2px;
    width: 30px;
    align-items: center;
}

.grip i {
    width: 2px;
    height: 2px;
    background: #b0b0b0;
}

.fx-box {
    display: flex;
    align-items: center;
    width: 109px;
    height: 25px;
    background: #fff;
    border: 1px solid #c6c6c6;
    padding-left: 12px;
    gap: 24px;
}

.fx {
    font-family: "Liberation Serif", serif;
    color: #777;
    font-size: 15px;
    margin-left: -1px;
}

.fx small {
    font-size: 11px;
}

.fx-input {
    display: flex;
    align-items: center;
    justify-content: flex-end;
    width: 909px;
    height: 25px;
    margin-left: 4px;
    background: #fff;
    border: 1px solid #c6c6c6;
    padding-right: 3px;
}

/* Sheet */
.workspace {
    display: flex;
    flex: 1;
    min-height: 0;
}

.sheet {
    display: flex;
    flex-direction: column;
    width: 897px;
}

.sheet-main {
    display: flex;
    height: 574px;
}

.grid {
    width: 876px;
}

.col-heads {
    display: flex;
    height: 18px;
    border-bottom: 1px solid #9f9f9f;
    background: #e6e6e6;
}

.corner {
    width: 27px;
    flex: none;
    position: relative;
    border-right: 1px solid #c6c6c6;
}

.corner i {
    position: absolute;
    right: 2px;
    bottom: 2px;
    width: 0;
    height: 0;
    border-left: 12px solid transparent;
    border-bottom: 12px solid #b5b5b5;
}

.col-head {
    width: 64px;
    flex: none;
    text-align: center;
    line-height: 17px;
    color: #222;
    border-right: 1px solid #b8b8b8;
    font-size: 12px;
    letter-spacing: 0;
}

.col-rest {
    width: 17px;
    border-right: 0;
}

.grid-body {
    display: flex;
    height: 556px;
}

.row-heads {
    width: 27px;
    flex: none;
    height: 556px;
    overflow: hidden;
    border-right: 1px solid #9f9f9f;
}

.row-heads div {
    height: 20px;
    line-height: 20px;
    padding: 1px 0 0 1px;
    text-align: center;
    color: #222;
    border-bottom: 1px solid #c6c6c6;
    letter-spacing: 0;
}

.row-heads .row-last {
    height: 16px;
    line-height: 15px;
    border-bottom: 0;
}

.canvas {
    position: relative;
    width: 849px;
    background: #b4c7e7;
    border-right: 1px solid #9f9f9f;
    border-bottom: 1px solid #9f9f9f;
}

.shape {
    position: absolute;
    font-family: "Liberation Serif", serif;
    font-weight: bold;
    font-size: 17px;
    letter-spacing: 0;
    white-space: nowrap;
    overflow: hidden;
}

.shape-blue {
    left: 343px;
    top: 152px;
    width: 95px;
    height: 34px;
    line-height: 34px;
    padding-left: 15px;
    color: #fff;
    border: 1px solid #8d9bb5;
    border-radius: 8px 8px 3px 3px;
    background: linear-gradient(#4f80d2, #2d5cb4);
}

.shape-gold {
    left: 566px;
    top: 163px;
    width: 94px;
    height: 34px;
    line-height: 34px;
    padding-left: 11px;
    color: #fff;
    border-radius: 12px 12px 0 0;
    background: linear-gradient(#ffc837, #ffbf14 60%, #edb200);
    border-bottom: 1px solid #d9a400;
}

.shape-light {
    color: #4472c4;
    border: 1px solid #5b9bd5;
    border-bottom-color: #7fb2e0;
    border-radius: 12px 12px 0 0;
    background: linear-gradient(#eaf2fb, #c4d9f0 60%, #a5c8ec 80%, #dbe9f7);
    height: 33px;
    line-height: 31px;
}

.s1 {
    left: 346px;
    top: 216px;
    width: 95px;
    padding-left: 14px;
}

.s2 {
    left: 568px;
    top: 225px;
    width: 95px;
    padding-left: 9px;
    font-size: 17.500px;
}

.rot-line {
    position: absolute;
    left: 390px;
    top: 128px;
    width: 1px;
    height: 24px;
    background: #999;
}

.rot-handle {
    position: absolute;
    left: 379px;
    top: 107px;
}

.handle {
    position: absolute;
    width: 10px;
    height: 10px;
    margin: -5px 0 0 -5px;
    border-radius: 50%;
    background: #fff;
    border: 1.500px solid #999;
}

.handle.orange {
    background: #f4a21e;
}

.h1 { left: 343px; top: 152px; }
.h2 { left: 390px; top: 152px; }
.h3 { left: 426.500px; top: 152px; }
.h4 { left: 437.500px; top: 152px; }
.h5 { left: 343px; top: 169px; }
.h6 { left: 343px; top: 186px; }
.h7 { left: 390px; top: 186px; }

/* Scrollbars */
.vscroll {
    display: flex;
    flex-direction: column;
    width: 15px;
    margin: 1px 0 0 3px;
    height: 574px;
}

.sb-btn {
    flex: none;
    display: flex;
    align-items: center;
    justify-content: center;
    width: 15px;
    height: 15px;
    background: #fff;
    border: 1px solid #ababab;
}

.sb-thumb {
    flex: none;
    background: #fff;
    border: 1px solid #ababab;
}

.sb-track {
    flex: none;
    background: #dcdcdc;
}

.vscroll .sb-thumb {
    height: 523px;
    border-top-width: 2px;
}

.vscroll .sb-track {
    height: 21px;
}

.tri {
    width: 0;
    height: 0;
    border: 4px solid transparent;
}

.tri-u {
    border-top: 0;
    border-bottom: 4px solid #777;
}

.tri-d {
    border-bottom: 0;
    border-top: 4px solid #777;
}

.tri-l {
    border-left: 0;
    border-right: 4px solid #777;
}

.tri-r {
    border-right: 0;
    border-left: 4px solid #777;
}

.sheet-tabs {
    display: flex;
    align-items: center;
    height: 27px;
    flex: none;
    position: relative;
}

.nav {
    width: 0;
    height: 0;
    border: 4px solid transparent;
}

.nav-l {
    margin-left: 26px;
    border-left: 0;
    border-right: 4px solid #c6c6c6;
}

.nav-r {
    margin-left: 24px;
    border-right: 0;
    border-left: 4px solid #c6c6c6;
}

.sheet-tab {
    width: 64px;
    height: 26px;
    margin: 0 0 1px 43px;
    background: #fff;
    border-bottom: 2px solid #217346;
    color: #217346;
    font-weight: bold;
    line-height: 27px;
    text-align: center;
    align-self: flex-start;
}

.add-sheet {
    margin-left: 34px;
}

.tabs-grip {
    margin-left: 309px;
    width: 30px;
}

.hscroll {
    display: flex;
    height: 15px;
}

.hscroll .sb-track {
    width: 57px;
}

.hscroll .sb-thumb {
    width: 235px;
    margin-right: 3px;
}

/* Format Shape pane */
.pane {
    position: relative;
    width: 417px;
    height: 602px;
    border-left: 1px solid #c6c6c6;
    background: #e6e6e6;
    color: #444;
}

.pane-head {
    display: flex;
    align-items: center;
    height: 30px;
    margin-top: 10px;
    padding: 0 22px 0 13px;
}

.pane-title {
    font-size: 20px;
    letter-spacing: -0.4px;
    color: #217346;
}

.pane-caret {
    width: 0;
    height: 0;
    margin: 0 0 0 auto;
    border: 4px solid transparent;
    border-top: 5px solid #777;
    border-bottom: 0;
}

.pane-close {
    margin-left: 31px;
}

.pane-tabs {
    display: flex;
    height: 20px;
    line-height: 20px;
    margin-top: 8px;
    padding-left: 18px;
    color: #333;
}

.pane-tab {
    margin-right: 17px;
}

.pane-tab.on {
    font-weight: bold;
    letter-spacing: -0.45px;
}

.pane-icons {
    display: flex;
    align-items: center;
    gap: 17px;
    height: 26px;
    margin-top: 9px;
    padding-left: 19px;
}

.pane-rule {
    position: relative;
    height: 1px;
    margin: 17px 16px 0 13px;
    background: #c6c6c6;
}

.pane-rule i {
    position: absolute;
    left: 91px;
    top: -5px;
    width: 8px;
    height: 8px;
    background: #e6e6e6;
    border-left: 1px solid #c6c6c6;
    border-top: 1px solid #c6c6c6;
    transform: rotate(45deg);
}

.section-head {
    display: flex;
    align-items: center;
    height: 26px;
    padding-left: 22px;
    font-weight: bold;
}

.section-head span {
    margin-left: 7px;
}

.section-head.open {
    height: 20px;
    margin: 4px 0 1px;
    color: #217346;
}

.section-head.first-closed {
    margin-top: 8px;
}

.tri-open {
    width: 0;
    height: 0;
    border-left: 6px solid transparent;
    border-bottom: 6px solid #444;
}

.tri-closed {
    width: 6px;
    height: 9px;
    background: #999;
    clip-path: polygon(0 0, 100% 50%, 0 100%, 0 0, 1px 2px, 1px 7px, 4.500px 4.500px, 1px 2px);
}

.field {
    display: flex;
    align-items: center;
    justify-content: space-between;
    height: 27px;
    padding: 0 35px 0 35px;
}

.spin {
    position: relative;
    display: flex;
    align-items: center;
    width: 73px;
    height: 21px;
    padding-left: 6px;
    background: #fff;
    border: 1px solid #ababab;
    color: #444;
}

.spin-arrows {
    position: absolute;
    right: 3px;
    top: 3px;
    width: 7px;
    height: 13px;
    background:
        linear-gradient(to top left, #777 50%, transparent 50%) 0 0 / 3.500px 4px no-repeat,
        linear-gradient(to top right, #777 50%, transparent 50%) 3.500px 0 / 3.500px 4px no-repeat,
        linear-gradient(to bottom left, #777 50%, transparent 50%) 0 100% / 3.500px 4px no-repeat,
        linear-gradient(to bottom right, #777 50%, transparent 50%) 3.500px 100% / 3.500px 4px no-repeat;
}

.check {
    display: flex;
    align-items: center;
    gap: 5px;
    height: 25px;
    padding-left: 35px;
}

.check i {
    width: 13px;
    height: 13px;
    background: #fff;
    border: 1px solid #ababab;
}

.check.disabled {
    color: #a0a0a0;
}

.check.disabled i {
    border-color: #e0e0e0;
}

/* Status bar */
.statusbar {
    display: flex;
    align-items: center;
    flex: none;
    height: 22px;
    background: #f3f3f3;
    border-top: 1px solid #c6c6c6;
    color: #444;
}

.ready {
    margin-left: 8px;
}

.macro {
    margin-left: 19px;
}

.view-btn {
    display: flex;
    align-items: center;
    justify-content: center;
    width: 38px;
    height: 21px;
}

.view-btn.on {
    margin-left: auto;
    background: #c6c6c6;
}

.zoom-slider {
    display: flex;
    align-items: center;
    margin-left: 5px;
}

.z-minus {
    width: 6px;
    height: 2px;
    background: #666;
}

.z-track {
    position: relative;
    width: 100px;
    height: 1px;
    margin: 0 4px;
    background: #aaa;
}

.z-thumb {
    position: absolute;
    left: 48px;
    top: -5px;
    width: 4px;
    height: 11px;
    background: #777;
}

.z-plus {
    width: 8px;
    height: 8px;
    background:
        linear-gradient(#666, #666) 0 3px / 8px 2px no-repeat,
        linear-gradient(#666, #666) 3px 0 / 2px 8px no-repeat;
}

.zoom-pct {
    margin: 0 20px 0 9px;
    width: 28px;
}

/* Mini toolbar */
.mini {
    position: absolute;
    left: 440px;
    top: 301px;
    display: flex;
    width: 134px;
    height: 62px;
    background: #fff;
    border: 1px solid #d0d0d0;
    box-shadow: 1px 1px 3px rgba(0, 0, 0, 0.2);
}

.mini-btn {
    position: relative;
    display: flex;
    flex-direction: column;
    align-items: center;
    padding-top: 6px;
    color: #444;
}

.mini-btn span {
    margin-top: 5px;
}

.m-style { width: 45px; }
.m-fill { width: 34px; }
.m-outline { width: 53px; }

.mini-caret {
    position: absolute;
    top: 17px;
    right: 2px;
    width: 0;
    height: 0;
    border: 3px solid transparent;
    border-top: 3px solid #666;
    border-bottom: 0;
}

/* Context menu */
.menu {
    position: absolute;
    left: 441px;
    top: 379px;
    display: flex;
    flex-direction: column;
    width: 166px;
    height: 404px;
    padding: 0 1px 1px;
    background: #fff;
    border: 1px solid #c6c6c6;
    box-shadow: 2px 2px 3px rgba(0, 0, 0, 0.2);
    color: #444;
}

.mi {
    position: relative;
    display: flex;
    align-items: center;
    flex: none;
    height: 24px;
    padding-left: 3px;
    white-space: nowrap;
}

.mi svg, .mi-blank {
    width: 16px;
    margin-right: 12px;
}

.mi-paste-head {
    height: 22px;
    font-weight: bold;
    background: linear-gradient(to right, #fff 23px, #ebebeb 23px);
}

.mi-paste-row {
    height: 30px;
    padding: 3px 0 0 29px;
}

.msep {
    flex: none;
    height: 2px;
    border-bottom: 1px solid #e2e2e2;
}

.dis {
    color: #a6a6a6;
}

.mi-arrow {
    position: absolute;
    right: 8px;
    top: 8px;
    width: 0;
    height: 0;
    border: 4px solid transparent;
    border-right: 0;
    border-left: 4px solid #666;
}

.dis .mi-arrow {
    border-left-color: #bbb;
}

.vbar {
    position: absolute;
    right: 21px;
    top: 4px;
    width: 1px;
    height: 16px;
    background: #d0d0d0;
}

.mi-hover {
    background: #c6c6c6;
}

/* Red annotations */
.marks {
    position: absolute;
    left: 0;
    top: 0;
    fill: none;
    stroke: #ed1c24;
    stroke-width: 3.500px;
    pointer-events: none;
}

.mark-box {
    stroke-width: 4.500px;
}
```
